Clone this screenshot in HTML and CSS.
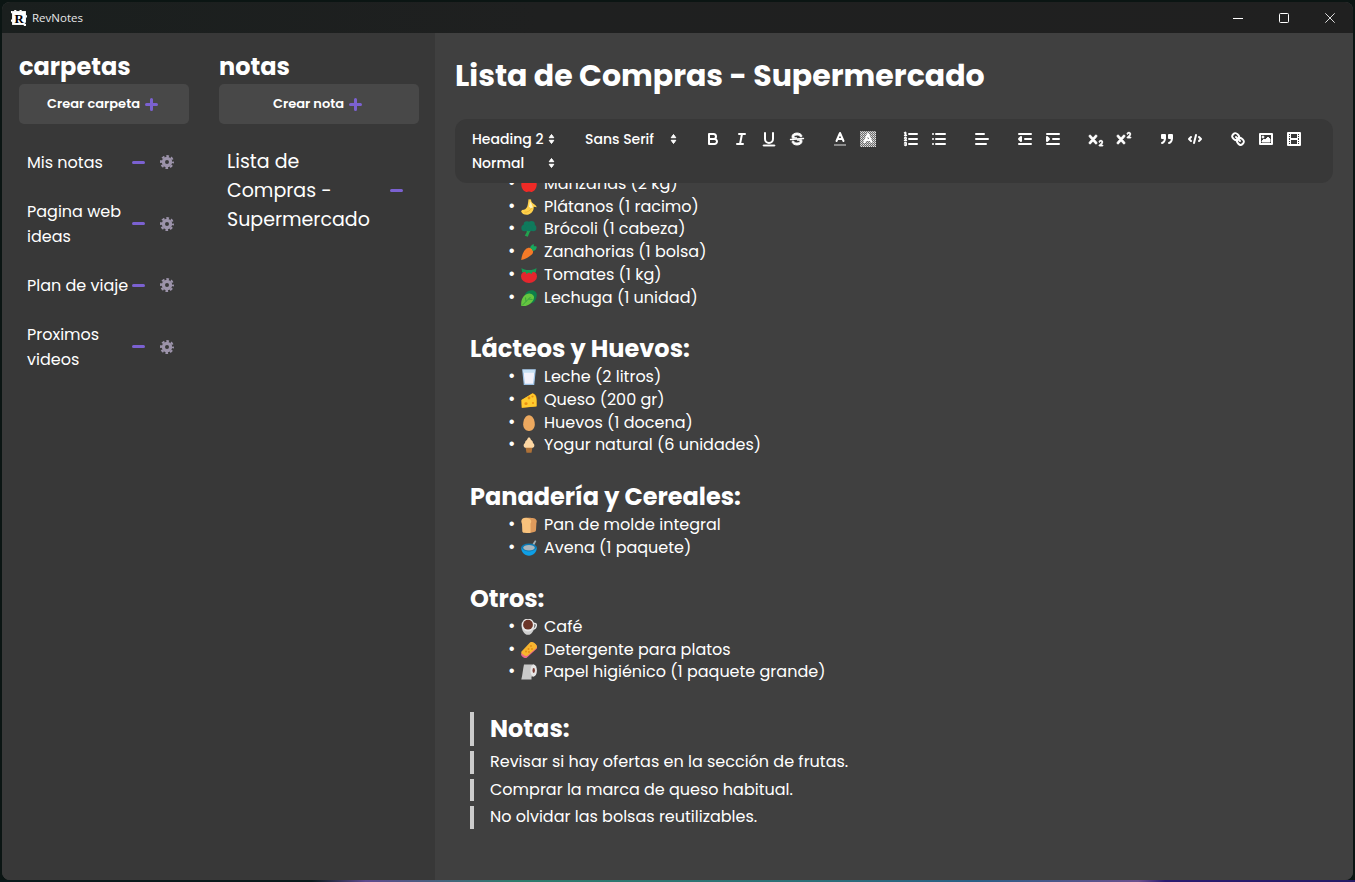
FILE: index.html
```html
<!DOCTYPE html>
<html lang="es">
<head>
<meta charset="utf-8">
<title>RevNotes</title>
<link rel="stylesheet" href="styles.css">
</head>
<body>
<svg class="sprite" xmlns="http://www.w3.org/2000/svg">
  <symbol id="plus" viewBox="0 0 13 13"><path d="M6.500 1.500v10M1.500 6.500h10" fill="none" stroke="currentColor" stroke-width="3" stroke-linecap="round"/></symbol>
  <symbol id="minus" viewBox="0 0 13 13"><path d="M1.500 6.500h10" fill="none" stroke="currentColor" stroke-width="3" stroke-linecap="round"/></symbol>
  <symbol id="gear" viewBox="0 0 14 14"><circle cx="7" cy="7" r="3.600" fill="none" stroke="currentColor" stroke-width="3.200"/><circle cx="7" cy="7" r="6" fill="none" stroke="currentColor" stroke-width="2" stroke-dasharray="2.700 2.012" stroke-dashoffset="1.350"/></symbol>
  <symbol id="arrows" viewBox="0 0 9 12"><path d="M4.500 1.500 6.800 4.700H2.200zM4.500 10.500 6.800 7.300H2.200z" fill="#fff" stroke="#fff" stroke-linejoin="round"/></symbol>

  <symbol id="e-apple" viewBox="0 0 16 16"><path fill="#ee2a26" d="M8 3.500C5 2 .3 3.500.3 8.500S4 16 6 16c1 0 1.400-.4 2-.4s1 .4 2 .4c2 0 5.700-2.500 5.700-7.500S11 2 8 3.500z"/></symbol>
  <symbol id="e-banana" viewBox="0 0 16 16"><path fill="#ffd04a" d="M.1 12.500 1 11c2.500 0 4.300-1.300 5.200-3.300C7 5.700 7.200 2.500 7.500.2l2.600.4c0 1.700.4 3 2.400 4.100 1.500.9 2.800 1.900 3.300 3.500l-3-.5-.2 2.300c-.5 2.500-2.600 4.800-5.600 5.700-3.200.6-6-.8-6.900-3.200z"/><path fill="none" stroke="#eab12e" stroke-width=".8" d="M3.500 13.200c3 .2 5.800-1.400 7.200-4.400"/><path fill="#fff3b8" d="M9 2.300l1.500 2.500L12 8.500l-2.500.7-1.500-2z"/></symbol>
  <symbol id="e-broccoli" viewBox="0 0 16 16"><path fill="#22a34e" d="M5 8h6L8.500 11.500 6.800 15.800 3.800 14.800 5.800 11z"/><g fill="#0f7a5c"><circle cx="6" cy="3.600" r="3.400"/><circle cx="10.500" cy="3.400" r="3.300"/><circle cx="12.200" cy="7" r="3.200"/><circle cx="3.600" cy="7" r="3.200"/><circle cx="8" cy="7" r="3.200"/></g></symbol>
  <symbol id="e-carrot" viewBox="0 0 16 16"><path fill="#f57a27" d="M.2 16C.6 12 2.200 7.500 4.700 5.200c1.600-1.400 4.300-2.200 6.300-.3 1.700 1.700 1.300 4.200-.2 5.700C8.200 13.200 4 15.500.2 16z"/><path fill="#17a85d" d="M9.200 4c.1-1.700 1.400-3.200 3.400-4 .3.900.3 1.800.2 2.300 1.100-.2 2.200-.1 3 .4-.1 2.300-1.900 4.400-4 4.200-.4-1.300-1.500-2.600-2.600-2.900z"/></symbol>
  <symbol id="e-tomato" viewBox="0 0 16 16"><ellipse cx="8" cy="9.400" rx="8" ry="6.500" fill="#e5262d"/><path fill="#159c55" d="M.5 1C2.500 2.500 4.500 3 8 3s5.500-.5 7.500-2L14.800 5.500 11.800 4.800 10.500 7 8 5.500 5.500 7 4.200 4.800 1.200 5.500z"/></symbol>
  <symbol id="e-lettuce" viewBox="0 0 16 16"><path fill="#0d7e4a" d="M4 4C6 .5 10 0 12 .3c1.800 1 3.800 2 3.800 3.900 0 2.800-.8 6-3.300 8.300-2 1-5 .5-5 .5z"/><path fill="#66c540" d="M.3 16C-.2 12.500.6 8.800 2.700 6.300c2.200-2.300 4.400-3 6.600-2.600 1.700.3 3.400 1.300 3.700 3.100.3 2.400-1.400 5.300-3.700 7C6.800 15.800 3 16.800.3 16z"/><path fill="none" stroke="#2f9c3d" stroke-width=".8" d="M1.200 15.400 9.500 7M5 11.500 4.500 7.500M7.500 9 11.500 9.500"/></symbol>
  <symbol id="e-milk" viewBox="0 0 16 16"><path fill="#f2f2fb" stroke="#9ec4e8" stroke-width="1.200" d="M1.800.8h12.400l-1.500 14.600H3.300z"/><path fill="#c6e0f3" d="M2.300 1.300h11.400l-.2 2.500H2.500z"/></symbol>
  <symbol id="e-cheese" viewBox="0 0 16 16"><path fill="#f0a314" d="M.5 8 11.500 1.200c2 .3 3.800 1.800 4 4.800v8.500L.8 15.800z"/><path fill="#ffcb2f" d="M.5 8h15v6.300L.8 15.800z"/><path fill="#ffcb2f" d="M.5 8 11.500 1.500c1.800.8 3.500 2.700 4 6.500z"/><g fill="#e88f12"><circle cx="8" cy="6" r="1.400"/><circle cx="11.500" cy="4.500" r="1.100"/><ellipse cx="5" cy="11.700" rx="1.600" ry="1.400"/><circle cx="12" cy="11" r="1"/></g></symbol>
  <symbol id="e-egg" viewBox="0 0 16 16"><path fill="#eda95f" d="M8 .2c3.200 0 5.800 4.300 5.800 9 0 4-2.600 6.700-5.800 6.700S2.200 13.200 2.200 9.200C2.200 4.500 4.800.2 8 .2z"/></symbol>
  <symbol id="e-icecream" viewBox="0 0 16 16"><path fill="#b07237" d="M4.500 10h7l-1 5.800h-5z"/><path fill="#fdd7a3" d="M8 .3c1.200.8 1.800 1.500 2 2.800 1.400.5 2 1.700 1.900 2.900 1 .5 1.700 1.700 1.400 3-.2 1-1 1.800-2 1.800H4.700c-1 0-1.800-.8-2-1.800-.3-1.300.4-2.500 1.400-3C4 4.800 4.600 3.600 6 3.100 6.200 1.800 6.800 1.100 8 .3z"/></symbol>
  <symbol id="e-bread" viewBox="0 0 16 16"><path fill="#dd9a5c" d="M5.500.8c3 0 7.500 0 9 1.100 1.500 1 1.500 2.800.9 4l-.4 7.200c0 1.300-1 1.700-2 2l-4 .8z"/><path fill="#f8c27c" d="M.4 5c-.5-2 1-4.200 4.200-4.200 2 0 5.200 1 5.600 3.200.2 1-.3 2-.7 2.500l.1 8.200c0 1-.7 1.500-1.500 1.500L3 15.800c-1 0-1.700-.7-1.700-1.500L1 7C.7 6.500.5 5.700.4 5z"/></symbol>
  <symbol id="e-bowl" viewBox="0 0 16 16"><path fill="#a4b0b6" d="M9.500 7 14 .2l1.300.7-3.500 7z"/><ellipse cx="8" cy="7.500" rx="7.800" ry="4" fill="#0c7bb5"/><ellipse cx="8" cy="7.800" rx="5.800" ry="2.800" fill="#a9b6bd"/><path fill="#0e9fe6" d="M.2 7.500C.8 9 4 11.300 8 11.300s7.200-2.300 7.800-3.800C16 11.800 12.500 15.800 8 15.800S0 11.800.2 7.500z"/></symbol>
  <symbol id="e-coffee" viewBox="0 0 16 16"><path fill="none" stroke="#e5e5e5" stroke-width="1.500" d="M13 4.500c2-.5 2.500 1 2.200 2.500-.3 1.800-1.700 3-3.400 3.300"/><path fill="#cfcfcf" d="M.6 6.200c0 4.800 2.400 9.600 6.400 9.600s6.400-4.800 6.400-9.600z"/><circle cx="7" cy="6" r="6.400" fill="#e9e9e9"/><circle cx="7" cy="5.700" r="4.900" fill="#6b3528"/></symbol>
  <symbol id="e-sponge" viewBox="0 0 16 16"><path fill="#e9678a" d="M.2 11.500 9.500.8c1.500-1 3.500 0 5.300 1.700 1.300 1.500 1.700 2.700.9 4.200L6 15.400c-1 1-2.500.8-3.800-.2C.4 13.900-.3 12.500.2 11.500z"/><path fill="#f7b52f" d="M.3 9.800 9 .4c1.500-1 3.700-.2 5.300 1.300 1.500 1.500 2 3.200 1.200 4.200L6.500 13.500C5 14.500 3.500 14 2 12.600 .5 11.300 0 10.500.3 9.800z"/><g fill="#e48a12"><circle cx="10" cy="4" r=".9"/><circle cx="7.500" cy="7" r=".9"/><circle cx="5" cy="9.500" r=".9"/><circle cx="11" cy="7" r=".9"/><circle cx="8" cy="10" r=".9"/></g></symbol>
  <symbol id="e-roll" viewBox="0 0 16 16"><path fill="#c9c9c9" d="M3 .5h10v12h-2.500v3H.3C1.500 11 2 5 3 .5z"/><ellipse cx="12.700" cy="6.500" rx="3.200" ry="6" fill="#e6e6e6"/><ellipse cx="12.700" cy="6.500" rx="1.200" ry="2.400" fill="#7a3b33"/></symbol>
</svg>

<div class="window">
  <header class="titlebar">
    <div class="appname">
      <svg class="logo" viewBox="0 0 15 15" aria-hidden="true">
        <rect x="1" y="1" width="13" height="13" fill="#fff"/>
        <path d="M0 1h1v2H0zM3 0h2v1H3zM8 0h2v1H8zM14 5h1v2h-1zM0 9h1v2H0zM12 13h2v2h-2z" fill="#fff"/>
        <text x="7.500" y="12" text-anchor="middle" class="logo-r">R</text>
        <path d="M13 12h1v1h-1z" fill="#000"/>
      </svg>
      <span>RevNotes</span>
    </div>
    <div class="wincontrols">
      <span class="winbtn"><svg viewBox="0 0 10 10"><path d="M0 5.500h10" stroke="#fff" fill="none"/></svg></span>
      <span class="winbtn"><svg viewBox="0 0 10 10"><rect x=".5" y=".5" width="9" height="9" rx="1" stroke="#fff" fill="none"/></svg></span>
      <span class="winbtn"><svg viewBox="0 0 10 10"><path d="M.3.300l9.400 9.400M9.700.300.300 9.700" stroke="#ddd" fill="none"/></svg></span>
    </div>
  </header>

  <div class="app">
    <aside class="sidebar">
      <section class="col col-folders">
        <h2 class="col-title">carpetas</h2>
        <button class="create">Crear carpeta <svg class="ic-plus"><use href="#plus"/></svg></button>
        <ul class="folders">
          <li class="folder"><span>Mis notas</span><svg class="ic-minus"><use href="#minus"/></svg><svg class="ic-gear"><use href="#gear"/></svg></li>
          <li class="folder"><span>Pagina web ideas</span><svg class="ic-minus"><use href="#minus"/></svg><svg class="ic-gear"><use href="#gear"/></svg></li>
          <li class="folder"><span>Plan de viaje</span><svg class="ic-minus"><use href="#minus"/></svg><svg class="ic-gear"><use href="#gear"/></svg></li>
          <li class="folder"><span>Proximos videos</span><svg class="ic-minus"><use href="#minus"/></svg><svg class="ic-gear"><use href="#gear"/></svg></li>
        </ul>
      </section>
      <section class="col col-notes">
        <h2 class="col-title">notas</h2>
        <button class="create">Crear nota <svg class="ic-plus"><use href="#plus"/></svg></button>
        <ul class="notes">
          <li class="note"><span>Lista de Compras - Supermercado</span><svg class="ic-minus"><use href="#minus"/></svg></li>
        </ul>
      </section>
    </aside>

    <main class="main">
      <h1 class="doc-title">Lista de Compras - Supermercado</h1>

      <div class="toolbar">
        <span class="fmt"><span class="picker p-header">Heading 2<svg class="ic-arrows"><use href="#arrows"/></svg></span></span>
        <span class="fmt"><span class="picker p-font">Sans Serif<svg class="ic-arrows"><use href="#arrows"/></svg></span></span>
        <span class="fmt">
          <span class="tb"><svg viewBox="0 0 18 18"><path class="st" d="M5,4H9.500A2.500,2.500,0,0,1,12,6.500v0A2.500,2.500,0,0,1,9.500,9H5A0,0,0,0,1,5,9V4A0,0,0,0,1,5,4Z"/><path class="st" d="M5,9h5.500A2.500,2.500,0,0,1,13,11.500v0A2.500,2.500,0,0,1,10.500,14H5a0,0,0,0,1,0,0V9A0,0,0,0,1,5,9Z"/></svg></span>
          <span class="tb"><svg viewBox="0 0 18 18"><path class="st" d="M7 4h6M5 14h6M8 14l2-10"/></svg></span>
          <span class="tb"><svg viewBox="0 0 18 18"><path class="st" d="M5,3V9a4.012,4.012,0,0,0,4,4H9a4.012,4.012,0,0,0,4-4V3"/><rect class="fl" height="1" rx=".5" ry=".5" width="12" x="3" y="15"/></svg></span>
          <span class="tb"><svg viewBox="0 0 18 18"><path class="st thin" d="M15.500 8.500 2.500 9.500"/><path class="fl" d="M9.007,8C6.542,7.791,6,7.519,6,6.500,6,5.792,7.283,5,9,5c1.571,0,2.765.679,2.969,1.309a1,1,0,0,0,1.900-.617C13.356,4.106,11.354,3,9,3,6.200,3,4,4.538,4,6.500a3.200,3.200,0,0,0,.5,1.843Z"/><path class="fl" d="M8.984,10C11.457,10.208,12,10.479,12,11.500c0,.708-1.283,1.500-3,1.500-1.571,0-2.765-.679-2.969-1.309a1,1,0,1,0-1.900.617C4.644,13.894,6.646,15,9,15c2.800,0,5-1.538,5-3.500a3.200,3.200,0,0,0-.5-1.843Z"/></svg></span>
        </span>
        <span class="fmt">
          <span class="tb"><svg viewBox="0 0 18 18"><path d="M3 15h12" stroke="#8a8a8a" stroke-width="2" fill="none"/><path class="st" d="M5.500 11 9 3l3.500 8M11.630 9H6.380"/></svg></span>
          <span class="tb"><svg viewBox="0 0 18 18"><defs><pattern id="hatch" width="2" height="2" patternUnits="userSpaceOnUse"><rect width="2" height="2" fill="#6e6e6e"/><rect width="1" height="1" fill="#e4e4e4"/><rect x="1" y="1" width="1" height="1" fill="#bdbdbd"/></pattern></defs><rect x="1" y="1" width="16" height="16" fill="url(#hatch)"/><path class="st" d="M5.500 12 9 4l3.500 8M11.630 10H6.380"/></svg></span>
        </span>
        <span class="fmt">
          <span class="tb"><svg viewBox="0 0 18 18"><path class="st" d="M7 4h8M7 9h8M7 14h8"/><path class="st thin" d="M2.500 5.500h2"/><path class="fl" d="M3.500,6A.5,.5,0,0,1,3,5.500V3.085l-.276.138A.5,.5,0,0,1,2.053,3c-.124-.247-.023-.324.224-.447l1-.5A.5,.5,0,0,1,4,2.500v3A.5,.5,0,0,1,3.500,6Z"/><path class="st thin" d="M4.500,10.500h-2c0-.234,1.850-1.076,1.850-2.234A.959,.959,0,0,0,2.500,8.156"/><path class="st thin" d="M2.500,14.846a.959,.959,0,0,0,1.850-.109A.7,.7,0,0,0,3.750,14a.688,.688,0,0,0,.6-.736,.959,.959,0,0,0-1.850-.109"/></svg></span>
          <span class="tb"><svg viewBox="0 0 18 18"><path class="st" d="M6 4h9M6 9h9M6 14h9M3 4h0M3 9h0M3 14h0"/></svg></span>
        </span>
        <span class="fmt">
          <span class="tb"><svg viewBox="0 0 18 18"><path class="st" d="M3 9h12M3 14h10M3 4h8"/></svg></span>
        </span>
        <span class="fmt">
          <span class="tb"><svg viewBox="0 0 18 18"><path class="st" d="M3 14h12M3 4h12M9 9h6"/><path class="st fl" d="M5 7v4L3 9z"/></svg></span>
          <span class="tb"><svg viewBox="0 0 18 18"><path class="st" d="M3 14h12M3 4h12M9 9h6"/><path class="st fl" d="M3 7v4l2-2z"/></svg></span>
        </span>
        <span class="fmt">
          <span class="tb"><svg viewBox="0 0 18 18"><path class="fl" d="M15.500,15H13.861a3.858,3.858,0,0,0,1.914-2.975,1.800,1.800,0,0,0-1.600-1.751A1.921,1.921,0,0,0,12.021,11.700a.5,.5,0,1,0,.957.291h0a.914,.914,0,0,1,1.053-.725,.81,.81,0,0,1,.744.762c0,1.076-1.170,1.870-1.940,2.431A1.456,1.456,0,0,0,12,15.500a.5,.5,0,0,0,.5.5h3A.5,.5,0,0,0,15.500,15Z"/><path class="fl" d="M9.650,5.241a1,1,0,0,0-1.409.108L6,7.964,3.759,5.349A1,1,0,0,0,2.241,6.649L4.684,9.500,2.241,12.350A1,1,0,0,0,3.759,13.650L6,11.036,8.241,13.650a1,1,0,1,0,1.518-1.300L7.316,9.500,9.759,6.651A1,1,0,0,0,9.650,5.241Z"/></svg></span>
          <span class="tb"><svg viewBox="0 0 18 18"><path class="fl" d="M15.500,7H13.861a4.015,4.015,0,0,0,1.914-2.975,1.800,1.800,0,0,0-1.600-1.751A1.922,1.922,0,0,0,12.021,3.700a.5,.5,0,1,0,.957.291,.917,.917,0,0,1,1.053-.725,.81,.81,0,0,1,.744.762c0,1.077-1.164,1.925-1.934,2.486A1.423,1.423,0,0,0,12,7.500a.5,.5,0,0,0,.5.5h3A.5,.5,0,0,0,15.500,7Z"/><path class="fl" d="M9.651,5.241a1,1,0,0,0-1.410.108L6,7.964,3.759,5.349a1,1,0,1,0-1.519,1.300L4.683,9.500,2.241,12.350a1,1,0,1,0,1.519,1.300L6,11.036,8.241,13.650a1,1,0,0,0,1.519-1.300L7.317,9.500,9.759,6.651A1,1,0,0,0,9.651,5.241Z"/></svg></span>
        </span>
        <span class="fmt">
          <span class="tb"><svg viewBox="0 0 18 18"><rect class="st fl" height="3" width="3" x="4" y="5"/><rect class="st fl" height="3" width="3" x="11" y="5"/><path class="st" d="M7,8c0,4.031-3,5-3,5M14,8c0,4.031-3,5-3,5"/></svg></span>
          <span class="tb"><svg viewBox="0 0 18 18"><path class="st" d="M5 7 3 9l2 2M13 7l2 2-2 2M10 5 8 13"/></svg></span>
        </span>
        <span class="fmt">
          <span class="tb"><svg viewBox="0 0 18 18"><path class="st" d="M7 7l4 4"/><path class="st" d="M8.900,4.577a3.476,3.476,0,0,1,.36,4.679A3.476,3.476,0,0,1,4.577,8.900C3.185,7.500,2.035,6.400,4.217,4.217S7.500,3.185,8.900,4.577Z"/><path class="st" d="M13.423,9.100a3.476,3.476,0,0,0-4.679-.36,3.476,3.476,0,0,0,.36,4.679c1.392,1.392,2.500,2.542,4.679.36S14.815,10.500,13.423,9.100Z"/></svg></span>
          <span class="tb"><svg viewBox="0 0 18 18"><rect class="st" height="10" width="12" x="3" y="4"/><circle class="fl" cx="6" cy="7" r="1"/><path class="fl" d="M5 12v-1l2-2 1 1 3-3 2 2v3z"/></svg></span>
          <span class="tb"><svg viewBox="0 0 18 18"><rect class="st" height="12" width="12" x="3" y="3"/><path class="fl flat" d="M5 3h1v12H5zM12 3h1v12h-1zM5 8h8v2H5zM3 5h3v1H3zM3 7h3v1H3zM3 10h3v1H3zM3 12h3v1H3zM12 5h3v1h-3zM12 7h3v1h-3zM12 10h3v1h-3zM12 12h3v1h-3z"/></svg></span>
        </span>
        <span class="fmt"><span class="picker p-size">Normal<svg class="ic-arrows"><use href="#arrows"/></svg></span></span>
      </div>

      <div class="editor">
        <div class="editor-inner">
          <ul class="items">
            <li><svg class="emoji" role="img" aria-label="🍎"><use href="#e-apple"/></svg>Manzanas (2 kg)</li>
            <li><svg class="emoji" role="img" aria-label="🍌"><use href="#e-banana"/></svg>Plátanos (1 racimo)</li>
            <li><svg class="emoji" role="img" aria-label="🥦"><use href="#e-broccoli"/></svg>Brócoli (1 cabeza)</li>
            <li><svg class="emoji" role="img" aria-label="🥕"><use href="#e-carrot"/></svg>Zanahorias (1 bolsa)</li>
            <li><svg class="emoji" role="img" aria-label="🍅"><use href="#e-tomato"/></svg>Tomates (1 kg)</li>
            <li><svg class="emoji" role="img" aria-label="🥬"><use href="#e-lettuce"/></svg>Lechuga (1 unidad)</li>
          </ul>
          <h2 class="section">Lácteos y Huevos:</h2>
          <ul class="items">
            <li><svg class="emoji" role="img" aria-label="🥛"><use href="#e-milk"/></svg>Leche (2 litros)</li>
            <li><svg class="emoji" role="img" aria-label="🧀"><use href="#e-cheese"/></svg>Queso (200 gr)</li>
            <li><svg class="emoji" role="img" aria-label="🥚"><use href="#e-egg"/></svg>Huevos (1 docena)</li>
            <li><svg class="emoji" role="img" aria-label="🍦"><use href="#e-icecream"/></svg>Yogur natural (6 unidades)</li>
          </ul>
          <h2 class="section">Panadería y Cereales:</h2>
          <ul class="items">
            <li><svg class="emoji" role="img" aria-label="🍞"><use href="#e-bread"/></svg>Pan de molde integral</li>
            <li><svg class="emoji" role="img" aria-label="🥣"><use href="#e-bowl"/></svg>Avena (1 paquete)</li>
          </ul>
          <h2 class="section">Otros:</h2>
          <ul class="items">
            <li><svg class="emoji" role="img" aria-label="☕"><use href="#e-coffee"/></svg>Café</li>
            <li><svg class="emoji" role="img" aria-label="🧽"><use href="#e-sponge"/></svg>Detergente para platos</li>
            <li><svg class="emoji" role="img" aria-label="🧻"><use href="#e-roll"/></svg>Papel higiénico (1 paquete grande)</li>
          </ul>
          <div class="quotes">
            <blockquote class="quote quote-head">Notas:</blockquote>
            <blockquote class="quote">Revisar si hay ofertas en la sección de frutas.</blockquote>
            <blockquote class="quote">Comprar la marca de queso habitual.</blockquote>
            <blockquote class="quote">No olvidar las bolsas reutilizables.</blockquote>
          </div>
        </div>
      </div>
    </main>
  </div>
</div>
</body>
</html>
```
FILE: styles.css
```css
* { box-sizing: border-box; }
html, body { height: 100%; }
body {
  margin: 0;
  padding: 2px;
  height: 882px;
  overflow: hidden;
  font-family: Poppins, "Liberation Sans", sans-serif;
  color: #fff;
  background:
    linear-gradient(90deg, #0a1a1c 0 23%, #5f4a8e 27%, #2e7b6c 38%, #2c6f78 60%, #2a5f86 72%, #6b4f8e 84%, #2a1a70 86%, #241a66 100%) bottom / 100% 2px no-repeat,
    #0b1513;
}
.sprite { display: none; }

.window {
  height: 100%;
  display: flex;
  flex-direction: column;
  border-radius: 8px;
  overflow: hidden;
  background: #404040;
}

.titlebar {
  flex: 0 0 31px;
  display: flex;
  align-items: center;
  justify-content: space-between;
  background: linear-gradient(90deg, #1a1f1e, #1f2020 40%, #202020);
}
.appname {
  display: flex;
  align-items: center;
  gap: 5px;
  padding-left: 9px;
  font: 11.5px "Open Sans", "Noto Sans", sans-serif;
  color: #e8e8e8;
}
.logo { width: 16px; height: 16px; display: block; }
.logo-r { font: 700 12px "Liberation Serif", serif; fill: #000; }
.wincontrols { display: flex; height: 100%; }
.winbtn {
  width: 46px;
  display: flex;
  align-items: center;
  justify-content: center;
}
.winbtn svg { width: 10px; height: 10px; display: block; }

.app { flex: 1; display: flex; min-height: 0; }

.sidebar {
  flex: 0 0 433px;
  display: flex;
  gap: 30px;
  padding: 16px 16px 0 17px;
  background: #383838;
}
.col-folders { width: 170px; }
.col-notes { width: 200px; }
.col-title {
  margin: 0;
  font-size: 24px;
  font-weight: 700;
  line-height: 35px;
}
.create {
  width: 100%;
  height: 40px;
  border: 0;
  border-radius: 5px;
  background: #484848;
  color: #fff;
  font: 600 13px Poppins, sans-serif;
  display: flex;
  align-items: center;
  justify-content: center;
  gap: 5px;
  padding: 0 3px 0 0;
}
.ic-plus { width: 13px; height: 13px; color: #7b61d1; }
.ic-minus { width: 13px; height: 13px; color: #7b61d1; flex: none; }
.ic-gear { width: 14px; height: 14px; color: #9c93aa; flex: none; margin-left: 15px; }

.folders, .notes, .items { list-style: none; margin: 0; padding: 0; }
.folders {
  margin-top: 25.5px;
  display: flex;
  flex-direction: column;
  gap: 24px;
  padding-left: 8px;
}
.folder {
  display: grid;
  grid-template-columns: 105px 13px 29px;
  align-items: center;
  font-size: 16px;
  line-height: 25px;
}
.notes { margin-top: 23px; padding-left: 8px; }
.note {
  display: grid;
  grid-template-columns: 150px 13px;
  column-gap: 13px;
  align-items: center;
  font-size: 19px;
  line-height: 29px;
}

.main {
  flex: 1;
  min-width: 0;
  display: flex;
  flex-direction: column;
  padding: 0 20px;
  background: #404040;
}
.doc-title {
  margin: 20px 0 21px;
  font-size: 30px;
  font-weight: 700;
  line-height: 45px;
}

.toolbar {
  display: flex;
  flex-wrap: wrap;
  padding: 8px 9px;
  border-radius: 12px;
  background: #383838;
  font-size: 14px;
  font-weight: 500;
}
.fmt { display: flex; margin-right: 15px; height: 24px; }
.picker {
  display: flex;
  align-items: center;
  justify-content: space-between;
  height: 24px;
  padding: 0 6px 0 8px;
  line-height: 24px;
}
.p-header, .p-size { width: 98px; }
.p-font { width: 107px; }
.ic-arrows { width: 9px; height: 12px; }
.tb {
  width: 28px;
  height: 24px;
  padding: 3px 5px;
  display: block;
}
.tb svg { width: 18px; height: 18px; display: block; }
.st { fill: none; stroke: #fff; stroke-width: 2; stroke-linecap: round; stroke-linejoin: round; }
.st.thin { stroke-width: 1.4; }
.fl { fill: #fff; stroke: #fff; stroke-width: .9; }
.fl.flat { stroke: none; }
.st.fl { fill: #fff; stroke-width: 2; }

.editor { flex: 1; min-height: 0; overflow: hidden; padding: 0 15px; }
.editor-inner { margin-top: -10px; font-size: 16px; line-height: 1.42; }
.items { padding-left: 38px; }
.items li::before {
  content: "•";
  display: inline-block;
  width: 13px;
  font-size: 18px;
  line-height: 1;
}
.emoji {
  width: 16px;
  height: 16px;
  margin-right: 7px;
  vertical-align: -3px;
}
.section {
  margin: 22.72px 0 0;
  font-size: 24px;
  font-weight: 700;
  line-height: 1.42;
}
.quotes { margin-top: 27.72px; }
.quote {
  margin: 5px 0 0;
  padding-left: 16px;
  border-left: 4px solid #ccc;
}
.quote-head {
  margin-top: 0;
  font-size: 24px;
  font-weight: 700;
}
```
